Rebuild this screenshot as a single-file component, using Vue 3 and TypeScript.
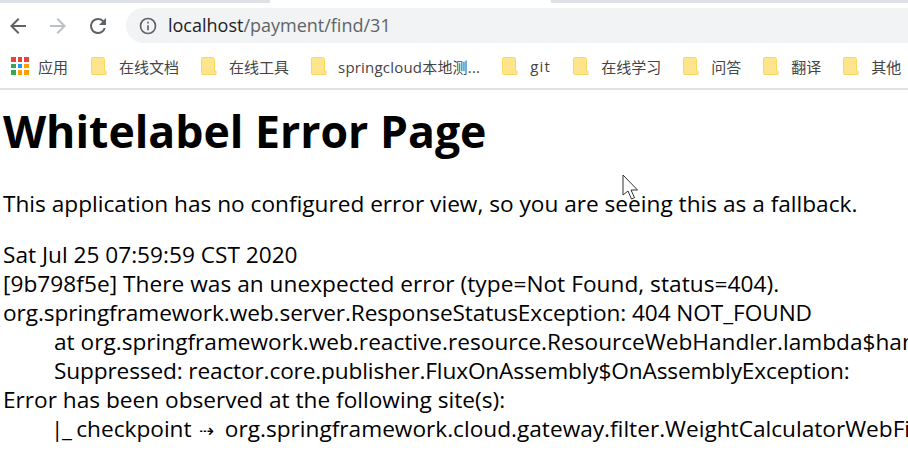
<script setup lang="ts">
const marks: string[] = ['在线文档', '在线工具', 'springcloud本地测...', 'git', '在线学习', '问答', '翻译', '其他']
const dots = ['#ea4335', '#ea4335', '#ea4335', '#34a853', '#2196f3', '#ffa000', '#34a853', '#ffa000', '#ffa000']
</script>

<template>
  <div class="page">
    <header class="chrome">
      <div class="strip"><span class="active-tab"></span></div>
      <div class="toolbar">
        <svg class="nav" viewBox="0 0 24 24" width="24" height="24"><path d="M20 11H7.83l5.59-5.59L12 4l-8 8 8 8 1.41-1.41L7.83 13H20z" fill="#5f6368"/></svg>
        <svg class="nav" viewBox="0 0 24 24" width="24" height="24"><path d="M4 11h12.170l-5.590-5.590L12 4l8 8-8 8-1.410-1.410L16.170 13H4z" fill="#bdc1c6"/></svg>
        <svg class="nav" viewBox="0 0 24 24" width="24" height="24"><path d="M17.650 6.350A7.960 7.960 0 0 0 12 4a8 8 0 1 0 7.730 10h-2.080A6 6 0 1 1 12 6c1.660 0 3.140.690 4.220 1.780L13 11h7V4z" fill="#5f6368"/></svg>
        <div class="omnibox">
          <svg viewBox="0 0 24 24" width="20" height="20"><path d="M11 7h2v2h-2zm0 4h2v6h-2zm1-9a10 10 0 1 0 0 20 10 10 0 0 0 0-20zm0 18a8 8 0 1 1 0-16 8 8 0 0 1 0 16z" fill="#5f6368"/></svg>
          <span class="url"><b>localhost</b>/payment/find/31</span>
        </div>
      </div>
      <nav class="bookmarks">
        <div class="mark apps">
          <span class="grid"><i v-for="(c, i) in dots" :key="i" :style="{ background: c }"></i></span>
          <span>应用</span>
        </div>
        <div v-for="m in marks" :key="m" class="mark">
          <svg viewBox="0 0 16 18" width="16" height="18"><path d="M1.500.5h10a2 2 0 0 1 2 2v11.500h1.500v3.500h-13.500a1 1 0 0 1-1-1V1.500a1 1 0 0 1 1-1z" fill="#fee48a" stroke="#fad75f"/></svg>
          <span :class="{ spring: m.startsWith('spring'), git: m === 'git' }">{{ m }}</span>
        </div>
      </nav>
    </header>
    <main class="content">
      <h1>Whitelabel Error Page</h1>
      <p>This application has no configured error view, so you are seeing this as a fallback.</p>
      <div class="log">
        <div>Sat Jul 25 07:59:59 CST 2020</div>
        <div class="loose">[9b798f5e] There was an unexpected error (type=Not Found, status=404).</div>
        <div class="tight">org.springframework.web.server.ResponseStatusException: 404 NOT_FOUND</div>
        <div class="in">at org.springframework.web.reactive.resource.ResourceWebHandler.lambda$handle$0(ResourceWebHandler.java:325)</div>
        <div class="in tighter">Suppressed: reactor.core.publisher.FluxOnAssembly$OnAssemblyException:</div>
        <div>Error has been observed at the following site(s):</div>
        <div class="in"><span class="pipe">|_</span> checkpoint <span class="arrow">⇢</span> org.springframework.cloud.gateway.filter.WeightCalculatorWebFilter [DefaultWebFilterChain]</div>
        <div class="in"><span class="pipe">|_</span> checkpoint <span class="arrow">⇢</span> HTTP GET "/payment/find/31" [ExceptionHandlingWebHandler]</div>
      </div>
    </main>
    <svg class="cursor" viewBox="0 0 18 28" width="18" height="28"><path d="M1 1v20l5-4 3.500 8 3-1.300-3.500-7.700h6.500z" fill="#fff" stroke="#333" stroke-width="1"/></svg>
  </div>
</template>

<style scoped>
.page { position: relative; width: 908px; height: 450px; overflow: hidden; background: #fff; color: #000; font-family: "Open Sans", "Noto Sans CJK SC", sans-serif; }
.chrome { height: 90px; border-bottom: 2px solid #dee1e6; box-sizing: border-box; }
.strip { height: 3px; background: #dee1e6; padding-left: 270px; }
.active-tab { display: block; width: 281px; height: 3px; background: #fff; }
.toolbar { height: 35px; margin-top: 5px; display: flex; align-items: center; padding-left: 6px; gap: 16px; }
.nav { flex: none; }
.omnibox { flex: 1; height: 35px; background: #f1f3f4; border-radius: 17.500px 0 0 17.500px; display: flex; align-items: center; padding-left: 12px; gap: 10px; }
.url { font-size: 18px; line-height: 24px; margin-top: -1px; color: #5f6368; white-space: nowrap; }
.url b { font-weight: 400; color: #202124; }
.bookmarks { height: 45px; display: flex; align-items: center; padding-left: 11px; padding-top: 1px; box-sizing: border-box; white-space: nowrap; font-size: 15px; color: #444; gap: 22px; }
.mark { display: flex; align-items: center; gap: 12px; }
.apps { gap: 10px; margin-right: 1px; }
.grid { display: grid; grid-template-columns: repeat(3, 4.500px); grid-auto-rows: 4.500px; gap: 2px; width: 17.500px; margin-right: -0.500px; }
.grid i { display: block; }
.spring { letter-spacing: 0.200px; margin-left: -1px; }
.git { letter-spacing: 1.200px; }
.content { padding: 0 3px; white-space: nowrap; font-size: 22.650px; line-height: 29px; }
h1 { font-size: 44.600px; line-height: 62px; font-weight: 700; margin: 10px 0 27px; }
p { margin: 0 0 22px; }
.in { padding-left: 51px; }
.loose { letter-spacing: 0.040px; }
.tight { letter-spacing: -0.080px; }
.tighter { letter-spacing: -0.140px; }
.pipe { letter-spacing: -1.500px; margin-left: -3px; }
.arrow { font-size: 18px; margin: 0 4.500px 0 2px; }
.cursor { position: absolute; left: 622px; top: 174px; }
</style>
